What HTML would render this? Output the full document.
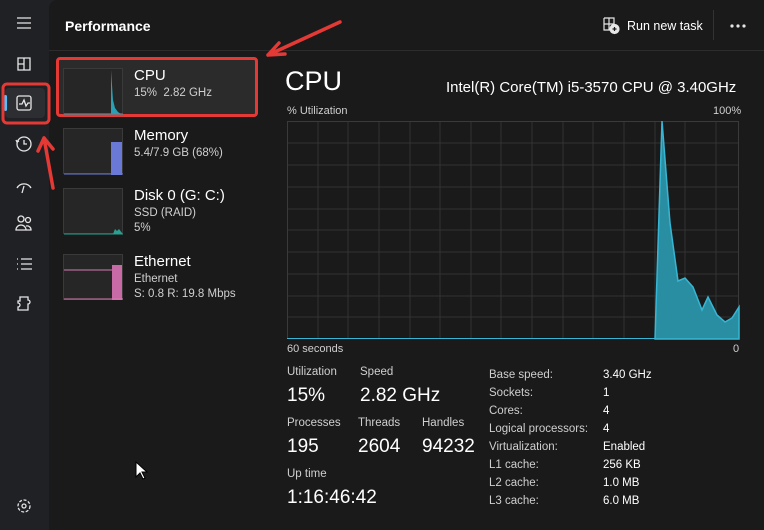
<!DOCTYPE html>
<html><head><meta charset="utf-8"><style>
*{margin:0;padding:0;box-sizing:border-box}
body{width:764px;height:530px;background:#202125;font-family:"Liberation Sans",sans-serif;color:#fff;position:relative;overflow:hidden}
.main{position:absolute;left:49px;top:0;width:715px;height:530px;background:#1a1a1a;border-top-left-radius:8px}
.t{position:absolute;white-space:nowrap}
.sep{position:absolute;left:49px;top:50px;width:715px;height:1px;background:#2c2c2c}
.thumb{position:absolute;left:63px;width:60px;height:46px;background:#262626;border:1px solid #3a3a3a}
.sm{font-size:11.5px;color:#d0d0d0}
.lbl{font-size:11.5px;color:#cfcfcf}
.big{font-size:19px;color:#fff}
</style></head><body>
<div class="main"></div>
<div class="sep"></div>
<svg style="position:absolute;left:0;top:0" width="49" height="530" fill="none" stroke="#e6e6e6" stroke-width="1.3">
<path d="M17 18h14M17 23h14M17 28h14"/>
<path d="M18 58h12v12h-12zM24 58v12M18 64h6"/>
<rect x="5" y="88" width="40" height="30" rx="4" fill="#2d2e32" stroke="none"/>
<rect x="4" y="95" width="3" height="16" rx="1.5" fill="#4cc2ff" stroke="none"/>
<rect x="17" y="96" width="14" height="14" rx="2"/><path d="M19 104h3l2-4 2 6 2-3h2"/>
<circle cx="24" cy="144" r="7"/><path d="M24 140v4h3M16 140l1 2 2-1"/>
<path d="M17 188a8 8 0 0 1 14 0M24 186l-2 7"/>
<circle cx="21" cy="219" r="3"/><circle cx="28" cy="220" r="2.5"/><path d="M16 230a5 5 0 0 1 10 0zM26 230h5a4 4 0 0 0-5-4"/>
<path d="M17 259h1M17 264h1M17 269h1M21 259h11M21 264h11M21 269h11"/>
<path d="M20 297h8v3a2 2 0 0 1 0 4v6h-10v-3a2 2 0 0 0 0-4v-2h2z"/>
<circle cx="24" cy="506" r="2"/><circle cx="24" cy="506" r="6" stroke-dasharray="3 1.6"/>
</svg>
<div class="t" style="left:65px;top:18px;font-size:14px;font-weight:bold">Performance</div>
<svg style="position:absolute;left:603px;top:17px" width="18" height="18" fill="none" stroke="#e6e6e6" stroke-width="1.2"><path d="M1 1h10v7M1 1v12h6M1 7h10M6 1v12"/><circle cx="11.5" cy="12" r="4.5" fill="#e6e6e6"/><path d="M11.5 10v4M9.5 12h4" stroke="#1a1a1a"/></svg>
<div class="t" style="left:627px;top:19px;font-size:12.5px">Run new task</div>
<div style="position:absolute;left:713px;top:10px;width:1px;height:30px;background:#333"></div>
<svg style="position:absolute;left:729px;top:22px" width="20" height="8" fill="#e6e6e6"><circle cx="3" cy="4" r="1.6"/><circle cx="9" cy="4" r="1.6"/><circle cx="15" cy="4" r="1.6"/></svg>
<div style="position:absolute;left:56px;top:57px;width:202px;height:60px;background:#2b2b2b;border:3px solid #e53935;border-radius:4px"></div>
<div class="thumb" style="top:68px"></div>
<svg style="position:absolute;left:63px;top:68px" width="60" height="48"><path d="M48 46V2l2 30 2 8 3 4 3 2 2 0V46z" fill="#2aa0b4"/><path d="M1 46h59" stroke="#2aa0b4"/></svg>
<div class="t" style="left:134px;top:67px;font-size:15px">CPU</div>
<div class="t sm" style="left:134px;top:87px">15%&nbsp; 2.82 GHz</div>
<div class="thumb" style="top:128px"></div>
<svg style="position:absolute;left:63px;top:128px" width="60" height="48"><rect x="48" y="14" width="11" height="33" fill="#6b79d6"/><path d="M1 46h59" stroke="#6b79d6"/></svg>
<div class="t" style="left:134px;top:127px;font-size:15px">Memory</div>
<div class="t sm" style="left:134px;top:147px">5.4/7.9 GB (68%)</div>
<div class="thumb" style="top:188px"></div>
<svg style="position:absolute;left:63px;top:188px" width="60" height="48"><path d="M50 46l2-5 2 2 2-2 3 4V46z" fill="#2aa090"/><path d="M1 46h59" stroke="#2aa090"/></svg>
<div class="t" style="left:134px;top:187px;font-size:15px">Disk 0 (G: C:)</div>
<div class="t sm" style="left:134px;top:207px">SSD (RAID)</div>
<div class="t sm" style="left:134px;top:222px">5%</div>
<div class="thumb" style="top:254px"></div>
<svg style="position:absolute;left:63px;top:254px" width="60" height="48"><path d="M1 16h48" stroke="#d87ab0"/><rect x="49" y="11" width="10" height="35" fill="#c86aa6"/><path d="M1 45h59" stroke="#d87ab0"/></svg>
<div class="t" style="left:134px;top:253px;font-size:15px">Ethernet</div>
<div class="t sm" style="left:134px;top:273px">Ethernet</div>
<div class="t sm" style="left:134px;top:288px">S: 0.8 R: 19.8 Mbps</div>
<div class="t" style="left:285px;top:66px;font-size:27px">CPU</div>
<div class="t" style="left:446px;top:79px;font-size:15px">Intel(R) Core(TM) i5-3570 CPU @ 3.40GHz</div>
<div class="t lbl" style="left:287px;top:105px;font-size:11px">% Utilization</div>
<div class="t lbl" style="left:713px;top:105px;font-size:11px">100%</div>
<svg style="position:absolute;left:287px;top:121px" width="453" height="219">
<g stroke="#333" stroke-width="1">
<path d="M31 0v218M61 0v218M92 0v218M123 0v218M153 0v218M184 0v218M214 0v218M245 0v218M276 0v218M306 0v218M337 0v218M368 0v218M398 0v218M429 0v218"/>
<path d="M0 22h452M0 44h452M0 66h452M0 88h452M0 109h452M0 131h452M0 153h452M0 175h452M0 196h452"/>
</g>
<rect x="0.5" y="0.5" width="451" height="217" fill="none" stroke="#3a3a3a"/>
<path d="M368 218L375 0L383 102L391 160L398 157L406 166L415 189L421 176L430 194L438 201L445 197L452 186V218Z" fill="#2a8ea3" stroke="#36b6d4" stroke-width="1.5"/>
<path d="M0 217.5h368" stroke="#36b6d4"/>
</svg>
<div class="t lbl" style="left:287px;top:343px;font-size:11px">60 seconds</div>
<div class="t lbl" style="left:733px;top:343px;font-size:11px">0</div>
<div class="t lbl" style="left:287px;top:366px">Utilization</div>
<div class="t lbl" style="left:360px;top:366px">Speed</div>
<div class="t big" style="left:287px;top:385px">15%</div>
<div class="t big" style="left:360px;top:385px">2.82 GHz</div>
<div class="t lbl" style="left:287px;top:417px">Processes</div>
<div class="t lbl" style="left:358px;top:417px">Threads</div>
<div class="t lbl" style="left:422px;top:417px">Handles</div>
<div class="t big" style="left:287px;top:436px">195</div>
<div class="t big" style="left:358px;top:436px">2604</div>
<div class="t big" style="left:422px;top:436px">94232</div>
<div class="t lbl" style="left:287px;top:468px">Up time</div>
<div class="t big" style="left:287px;top:487px">1:16:46:42</div>
<div class="t lbl" style="left:489px;top:366px;line-height:18px">Base speed:<br>Sockets:<br>Cores:<br>Logical processors:<br>Virtualization:<br>L1 cache:<br>L2 cache:<br>L3 cache:</div>
<div class="t lbl" style="left:603px;top:366px;line-height:18px;color:#fff">3.40 GHz<br>1<br>4<br>4<br>Enabled<br>256 KB<br>1.0 MB<br>6.0 MB</div>
<svg style="position:absolute;left:135px;top:461px" width="14" height="20"><path d="M1 1v15l4-4 3 6 2-1-3-6h5z" fill="#fff" stroke="#000"/></svg>
<svg style="position:absolute;left:0;top:0" width="764" height="530" fill="none" stroke="#e53935" stroke-width="3.5" stroke-linecap="round">
<rect x="3" y="84" width="46" height="39" rx="4" stroke-width="3"/>
<path d="M340 22L268 55M268 55l17-1M268 55l11-12"/>
<path d="M53 188L44 138M44 138l-6 13M44 138l9 11"/>
</svg>
</body></html>
